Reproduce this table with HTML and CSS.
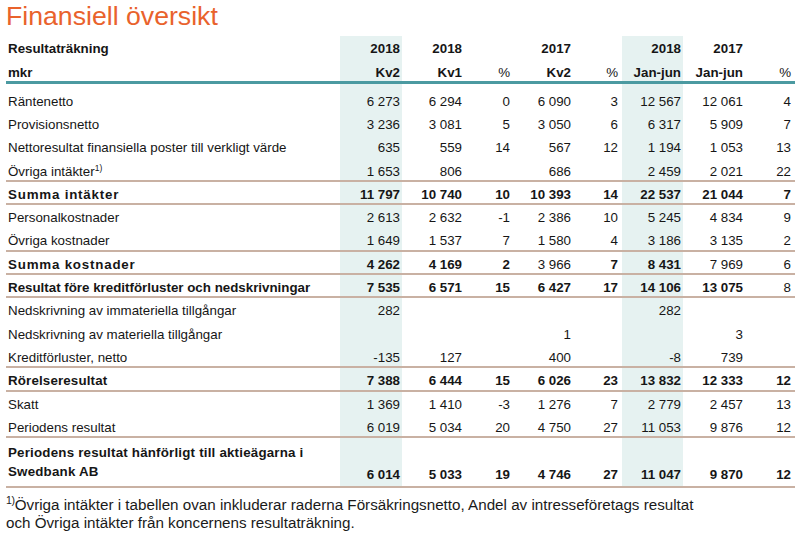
FILE: index.html
```html
<!DOCTYPE html>
<html lang="sv">
<head>
<meta charset="utf-8">
<title>Finansiell översikt</title>
<link rel="stylesheet" href="styles.css">
</head>
<body>
<h1 class="title">Finansiell översikt</h1>
<table class="fin">
  <colgroup>
    <col class="c-label"><col class="c-w"><col class="c-w"><col class="c-p"><col class="c-w2"><col class="c-p2"><col class="c-w2"><col class="c-w"><col class="c-p3">
  </colgroup>
  <thead>
    <tr class="h1">
      <th class="lbl">Resultaträkning</th><th class="sh">2018</th><th>2018</th><th></th><th>2017</th><th class="pr"></th><th class="sh">2018</th><th>2017</th><th class="pr"></th>
    </tr>
    <tr class="h2">
      <th class="lbl">mkr</th><th class="sh">Kv2</th><th>Kv1</th><th class="rg">%</th><th>Kv2</th><th class="rg pr">%</th><th class="sh">Jan-jun</th><th>Jan-jun</th><th class="rg pr">%</th>
    </tr>
  </thead>
  <tbody>
    <tr class="first">
      <td class="lbl">Räntenetto</td><td class="sh">6 273</td><td>6 294</td><td>0</td><td>6 090</td><td class="pr">3</td><td class="sh">12 567</td><td>12 061</td><td class="pr">4</td>
    </tr>
    <tr>
      <td class="lbl">Provisionsnetto</td><td class="sh">3 236</td><td>3 081</td><td>5</td><td>3 050</td><td class="pr">6</td><td class="sh">6 317</td><td>5 909</td><td class="pr">7</td>
    </tr>
    <tr>
      <td class="lbl">Nettoresultat finansiella poster till verkligt värde</td><td class="sh">635</td><td>559</td><td>14</td><td>567</td><td class="pr">12</td><td class="sh">1 194</td><td>1 053</td><td class="pr">13</td>
    </tr>
    <tr class="line">
      <td class="lbl">Övriga intäkter<sup class="fn">1)</sup></td><td class="sh">1 653</td><td>806</td><td></td><td>686</td><td class="pr"></td><td class="sh">2 459</td><td>2 021</td><td class="pr">22</td>
    </tr>
    <tr class="line sum">
      <td class="lbl wide">Summa intäkter</td><td class="sh">11 797</td><td>10 740</td><td>10</td><td>10 393</td><td class="pr">14</td><td class="sh">22 537</td><td>21 044</td><td class="pr">7</td>
    </tr>
    <tr>
      <td class="lbl">Personalkostnader</td><td class="sh">2 613</td><td>2 632</td><td>-1</td><td>2 386</td><td class="pr">10</td><td class="sh">5 245</td><td>4 834</td><td class="pr">9</td>
    </tr>
    <tr class="line">
      <td class="lbl">Övriga kostnader</td><td class="sh">1 649</td><td>1 537</td><td>7</td><td>1 580</td><td class="pr">4</td><td class="sh">3 186</td><td>3 135</td><td class="pr">2</td>
    </tr>
    <tr class="line sum">
      <td class="lbl wide">Summa kostnader</td><td class="sh">4 262</td><td>4 169</td><td>2</td><td class="rg">3 966</td><td class="pr">7</td><td class="sh">8 431</td><td class="rg">7 969</td><td class="pr rg">6</td>
    </tr>
    <tr class="line sum">
      <td class="lbl">Resultat före kreditförluster och nedskrivningar</td><td class="sh">7 535</td><td>6 571</td><td>15</td><td>6 427</td><td class="pr">17</td><td class="sh">14 106</td><td>13 075</td><td class="pr rg">8</td>
    </tr>
    <tr>
      <td class="lbl">Nedskrivning av immateriella tillgångar</td><td class="sh">282</td><td></td><td></td><td></td><td class="pr"></td><td class="sh">282</td><td></td><td class="pr"></td>
    </tr>
    <tr>
      <td class="lbl">Nedskrivning av materiella tillgångar</td><td class="sh"></td><td></td><td></td><td>1</td><td class="pr"></td><td class="sh"></td><td>3</td><td class="pr"></td>
    </tr>
    <tr class="line">
      <td class="lbl">Kreditförluster, netto</td><td class="sh">-135</td><td>127</td><td></td><td>400</td><td class="pr"></td><td class="sh">-8</td><td>739</td><td class="pr"></td>
    </tr>
    <tr class="line sum">
      <td class="lbl mid">Rörelseresultat</td><td class="sh">7 388</td><td>6 444</td><td>15</td><td>6 026</td><td class="pr">23</td><td class="sh">13 832</td><td>12 333</td><td class="pr">12</td>
    </tr>
    <tr>
      <td class="lbl">Skatt</td><td class="sh">1 369</td><td>1 410</td><td>-3</td><td>1 276</td><td class="pr">7</td><td class="sh">2 779</td><td>2 457</td><td class="pr">13</td>
    </tr>
    <tr class="line">
      <td class="lbl">Periodens resultat</td><td class="sh">6 019</td><td>5 034</td><td>20</td><td>4 750</td><td class="pr">27</td><td class="sh">11 053</td><td>9 876</td><td class="pr">12</td>
    </tr>
    <tr class="line sum last">
      <td class="lbl two">Periodens resultat hänförligt till aktieägarna i<br>Swedbank AB</td><td class="sh">6 014</td><td>5 033</td><td>19</td><td>4 746</td><td class="pr">27</td><td class="sh">11 047</td><td>9 870</td><td class="pr">12</td>
    </tr>
  </tbody>
</table>
<p class="note"><sup class="note-fn">1)</sup>Övriga intäkter i tabellen ovan inkluderar raderna Försäkringsnetto, Andel av intresseföretags resultat<br>och Övriga intäkter från koncernens resultaträkning.</p>
</body>
</html>
```
FILE: styles.css
```css
html, body {
  margin: 0;
  padding: 0;
  background: #ffffff;
}

body {
  font-family: "Liberation Sans", Arial, sans-serif;
  color: #161616;
}

.title {
  margin: 0;
  padding: 0 0 0 6px;
  font-size: 26.67px;
  line-height: 32px;
  font-weight: normal;
  color: #e9622c;
}

.fin {
  margin: 4px 0 0 6px;
  width: 789px;
  table-layout: fixed;
  border-collapse: separate;
  border-spacing: 0;
  font-size: 13.33px;
  line-height: 15px;
}

.c-label { width: 334px; }
.c-w { width: 62px; }
.c-w2 { width: 61px; }
.c-p { width: 48px; }
.c-p2 { width: 49px; }
.c-p3 { width: 50px; }

.fin th,
.fin td {
  padding: 5px 2px 3.33px 2px;
  text-align: right;
  vertical-align: bottom;
  white-space: nowrap;
}

.fin th {
  font-weight: bold;
}

.fin .lbl {
  text-align: left;
  padding-left: 2px;
}

.fin .pr {
  padding-right: 4px;
}

.fin .sh {
  background: #e6f2f1;
}

.fin .rg {
  font-weight: normal;
}

.fin .h2 th {
  padding-top: 6px;
  padding-bottom: 1px;
  border-bottom: 3px solid #4b9aa1;
}

.fin .first td {
  padding-top: 9.2px;
}

.fin .line td {
  padding-bottom: 1.33px;
  border-bottom: 2px solid #c9b1a3;
}

.fin .sum td {
  font-weight: bold;
}

.fin .sum td.rg {
  font-weight: normal;
}

.fin .wide {
  letter-spacing: 0.8px;
}

.fin .mid {
  letter-spacing: 0.15px;
}

.fin .last td {
  padding-top: 4.5px;
  padding-bottom: 4px;
}

.fin .two {
  line-height: 19.5px;
  letter-spacing: 0.2px;
}

.fn {
  font-size: 8.5px;
  line-height: 0;
  vertical-align: 5px;
}

.note {
  margin: 8px 0 0 6px;
  font-size: 15.2px;
  line-height: 18.5px;
  color: #1a1a1a;
}

.note-fn {
  font-size: 10.5px;
  line-height: 0;
  vertical-align: 6px;
  letter-spacing: -0.3px;
}
```
